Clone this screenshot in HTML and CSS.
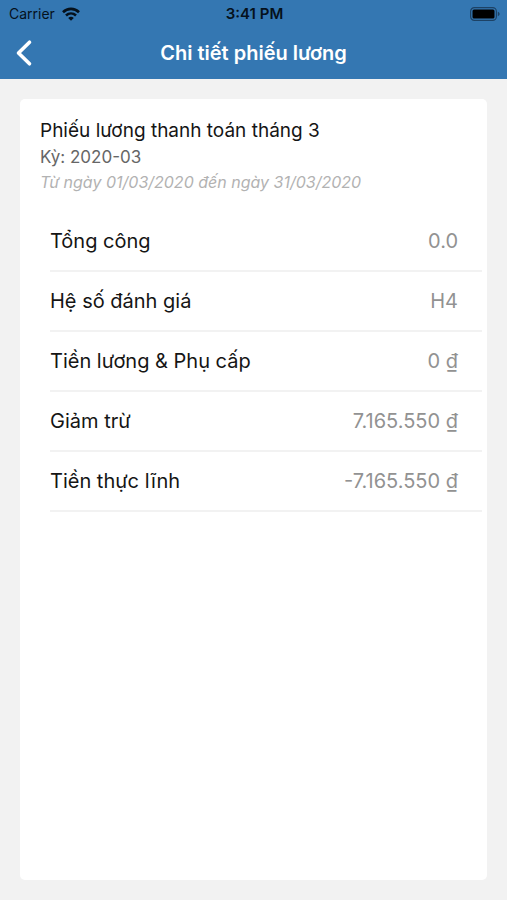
FILE: index.html
```html
<!DOCTYPE html>
<html lang="vi">
<head>
<meta charset="utf-8">
<meta name="viewport" content="width=device-width, initial-scale=1">
<title>Chi tiết phiếu lương</title>
<link rel="stylesheet" href="styles.css">
</head>
<body>
<header class="header">
  <div class="status">
    <div class="carrier">
      <span>Carrier</span>
      <svg width="18" height="14" viewBox="0 0 18 14" fill="none" stroke="currentColor" stroke-width="2.6" aria-hidden="true">
        <path d="M1 5.2C5.5.8 12.5.8 17 5.2"/>
        <path d="M4 8.5c2.900-2.700 7.100-2.700 10 0"/>
        <path d="M6.200 10.900c1.700-1.500 3.900-1.500 5.600 0L9 13.800z" fill="currentColor" stroke="none"/>
      </svg>
    </div>
    <time class="time">3:41 PM</time>
    <svg class="battery" width="30" height="14" viewBox="0 0 30 14" aria-hidden="true">
      <rect x=".6" y=".6" width="25.800" height="12.800" rx="3.800" fill="none" stroke="#1d4265" stroke-width="1.200"/>
      <rect x="2.500" y="2.500" width="22" height="9" rx="1.500" fill="#000"/>
      <path d="M27.800 4.800c2.400.7 2.400 3.700 0 4.400z" fill="#1d4265"/>
    </svg>
  </div>
  <div class="nav">
    <button class="back" type="button" aria-label="Quay lại">
      <svg width="18" height="28" viewBox="0 0 18 28" fill="none" stroke="currentColor" stroke-width="3.600" stroke-linecap="round" stroke-linejoin="round" aria-hidden="true">
        <path d="M14.500 3.200 3.500 14l11 10.800"/>
      </svg>
    </button>
    <h1 class="title">Chi tiết phiếu lương</h1>
  </div>
</header>
<main class="card">
  <h2 class="name">Phiếu lương thanh toán tháng 3</h2>
  <p class="period">Kỳ: 2020-03</p>
  <p class="range">Từ ngày 01/03/2020 đến ngày 31/03/2020</p>
  <dl class="list">
    <div class="row"><dt>Tổng công</dt><dd>0.0</dd></div>
    <div class="row"><dt>Hệ số đánh giá</dt><dd>H4</dd></div>
    <div class="row"><dt>Tiền lương &amp; Phụ cấp</dt><dd>0 ₫</dd></div>
    <div class="row"><dt>Giảm trừ</dt><dd>7.165.550 ₫</dd></div>
    <div class="row"><dt>Tiền thực lĩnh</dt><dd>-7.165.550 ₫</dd></div>
  </dl>
</main>
</body>
</html>
```
FILE: styles.css
```css
* {
  box-sizing: border-box;
  margin: 0;
  padding: 0;
}

body {
  display: flex;
  flex-direction: column;
  min-height: 100vh;
  background: #f2f2f2;
  color: #151515;
  font-family: Inter, "Liberation Sans", sans-serif;
}

.header {
  background: #3477b2;
}

.status {
  display: grid;
  grid-template-columns: 1fr auto 1fr;
  align-items: center;
  height: 27px;
  padding: 0 7px 0 9px;
  color: #05111c;
  font-size: 14px;
}

.carrier {
  display: flex;
  align-items: center;
  gap: 7px;
}

.time {
  font-size: 15px;
  font-weight: 600;
}

.battery {
  justify-self: end;
}

.nav {
  display: grid;
  grid-template-columns: 48px 1fr 48px;
  align-items: center;
  height: 52px;
}

.back {
  display: flex;
  justify-content: center;
  border: 0;
  background: none;
  color: #fff;
}

.title {
  color: #fff;
  font-size: 20px;
  font-weight: 600;
  text-align: center;
}

.card {
  flex: 1;
  margin: 20px;
  padding: 19px 5px 20px 20px;
  border-radius: 5px;
  background: #fff;
}

.name {
  font-size: 19px;
  font-weight: 400;
  line-height: 26px;
}

.period {
  color: #666;
  font-size: 17px;
  line-height: 26px;
}

.range {
  color: #b2b2b2;
  font-size: 16px;
  font-style: italic;
  line-height: 24px;
}

.list {
  margin: 18px 0 0 10px;
}

.row {
  display: flex;
  align-items: center;
  justify-content: space-between;
  height: 60px;
  padding-right: 24px;
  border-bottom: 2px solid #f2f2f2;
  font-size: 20px;
}

.row dd {
  color: #929292;
}
```
